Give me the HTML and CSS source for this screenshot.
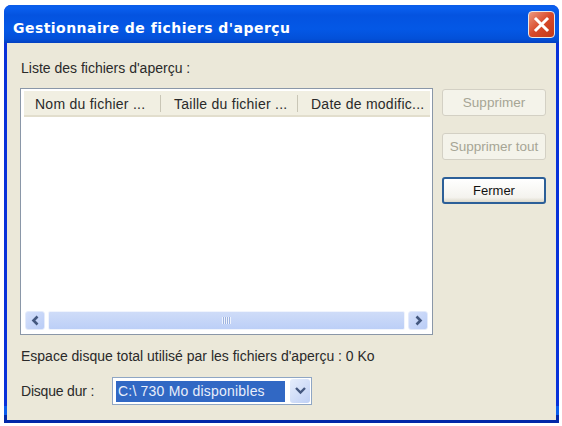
FILE: index.html
```html
<!DOCTYPE html>
<html>

<head>
    <title>Gestionnaire de fichiers d'aperçu</title>
    <link rel="stylesheet" href="styles.css">
</head>

<body>
    <div class="window">
        <div class="titlebar">
            <span class="title">Gestionnaire de fichiers d'aperçu</span>
            <div class="close">
                <svg width="17" height="17" viewBox="0 0 17 17">
                    <path d="M3 3 L14 14 M14 3 L3 14" stroke="#fff" stroke-width="3" stroke-linecap="square"/>
                </svg>
            </div>
        </div>

        <div class="client">
            <div class="list-label">Liste des fichiers d'aperçu :</div>

            <div class="main">
                <div class="list">
                    <div class="list-header">
                        <div class="col col-name">Nom du fichier ...</div>
                        <div class="col col-size">Taille du fichier ...</div>
                        <div class="col col-date">Date de modific...</div>
                    </div>
                    <div class="list-body"></div>
                    <div class="scrollbar">
                        <div class="scroll-btn">
                            <svg width="11" height="11" viewBox="0 0 11 11">
                                <path d="M7.5 1.5 L3.5 5.5 L7.5 9.5" fill="none" stroke="#44587f" stroke-width="2.6"/>
                            </svg>
                        </div>
                        <div class="scroll-thumb">
                            <div class="grip"></div>
                        </div>
                        <div class="scroll-btn">
                            <svg width="11" height="11" viewBox="0 0 11 11">
                                <path d="M3.5 1.5 L7.5 5.5 L3.5 9.5" fill="none" stroke="#44587f" stroke-width="2.6"/>
                            </svg>
                        </div>
                    </div>
                </div>

                <div class="buttons">
                    <button class="btn" disabled>Supprimer</button>
                    <button class="btn" disabled>Supprimer tout</button>
                    <button class="btn btn-default">Fermer</button>
                </div>
            </div>

            <div class="usage">Espace disque total utilisé par les fichiers d'aperçu : 0 Ko</div>

            <div class="drive-row">
                <span class="drive-label">Disque dur :</span>
                <div class="combo">
                    <div class="combo-value">C:\ 730 Mo disponibles</div>
                    <div class="combo-arrow">
                        <svg width="13" height="10" viewBox="0 0 13 10">
                            <path d="M2 2 L6.5 6.5 L11 2" fill="none" stroke="#44587f" stroke-width="2.4"/>
                        </svg>
                    </div>
                </div>
            </div>
        </div>
    </div>
</body>
</html>
```

FILE: styles.css
```css
html,
body {
    margin: 0;
    background: #fff;
}

body {
    padding: 5px 3px 3px 4px;
    height: 426px;
    box-sizing: border-box;
    overflow: hidden;
    font-family: "Liberation Sans", Arial, sans-serif;
    font-size: 14px;
    color: #2a2a2a;
}

.window {
    height: 100%;
    display: flex;
    flex-direction: column;
    background: linear-gradient(#0831d9 96%, #0a5cec 96%, #0a5cec 98%, #0228a8 98%);
    border-radius: 7px 7px 0 0;
    padding: 0 3px 3px;
    box-sizing: border-box;
}

.titlebar {
    height: 38px;
    margin: 0 -3px;
    padding: 0 4px 0 9px;
    display: flex;
    align-items: center;
    justify-content: space-between;
    border-radius: 7px 7px 0 0;
    background: linear-gradient(#0a5ce8 0, #0a5fee 3px, #0453e0 10px, #0458e6 24px, #0350d8 34px, #0340c0 38px);
}

.title {
    font-family: "DejaVu Sans", sans-serif;
    font-weight: bold;
    font-size: 14px;
    color: #fff;
    letter-spacing: 0.46px;
    padding-top: 7px;
}

.close {
    width: 25px;
    height: 25px;
    display: flex;
    align-items: center;
    justify-content: center;
    border: 1px solid #e8e8e8;
    border-radius: 4px;
    background: linear-gradient(135deg, #ec9a80, #d8492a 50%, #c23a18);
}

.client {
    flex: 1;
    background: #ebe8d9;
    padding: 17px 10px 0 13px;
    display: flex;
    flex-direction: column;
}

.list-label {
    height: 16px;
    line-height: 16px;
    margin-bottom: 12px;
    padding-left: 1px;
}

.main {
    display: flex;
    align-items: flex-start;
    gap: 9px;
}

.list {
    width: 413px;
    height: 247px;
    box-sizing: border-box;
    border: 1px solid #8a97a8;
    background: #fff;
    padding: 2px 2px 2px 3px;
    display: flex;
    flex-direction: column;
}

.list-header {
    height: 26px;
    display: flex;
    align-items: center;
    background: #f1efe2;
    border-bottom: 2px solid #e2decd;
    box-sizing: border-box;
}

.col {
    box-sizing: border-box;
    white-space: nowrap;
    overflow: hidden;
    padding-left: 11px;
    line-height: 19px;
    height: 17px;
    letter-spacing: 0.25px;
}

.col-name {
    width: 137px;
    border-right: 1px solid #c9c6b6;
}

.col-size {
    width: 137px;
    border-right: 1px solid #c9c6b6;
    padding-left: 13px;
}

.col-date {
    flex: 1;
    padding-left: 13px;
}

.list-body {
    flex: 1;
}

.scrollbar {
    height: 19px;
    display: flex;
    gap: 3px;
    padding: 0 2px 0 1px;
    margin-bottom: 2px;
    align-items: stretch;
}

.scroll-btn {
    width: 20px;
    display: flex;
    align-items: center;
    justify-content: center;
    border-radius: 3px;
    background: linear-gradient(135deg, #d6e1fb, #b9ccf6);
    border: 1px solid #e4ebfb;
    box-sizing: border-box;
}

.scroll-thumb {
    flex: 1;
    display: flex;
    align-items: center;
    justify-content: center;
    border-radius: 2px;
    border: 1px solid #f0f4fd;
    background: linear-gradient(#cfdcf8, #bccff7);
}

.grip {
    width: 9px;
    height: 7px;
    background: repeating-linear-gradient(90deg, #eef3fd 0 1px, #9fb4e0 1px 2px);
}

.buttons {
    display: flex;
    flex-direction: column;
    gap: 17px;
    padding-top: 1px;
}

.btn {
    width: 104px;
    height: 27px;
    padding: 0;
    border: 1px solid #d3d0c4;
    border-radius: 3px;
    background: #f4f3ea;
    font-family: inherit;
    font-size: 13.5px;
    color: #a6a595;
}

.btn-default {
    color: #111;
    font-size: 13px;
    border: 2px solid #2c5f98;
    background: linear-gradient(#ffffff, #f4f3ee 80%, #dcd8ca);
}

.usage {
    margin-top: 13px;
    height: 16px;
    line-height: 16px;
    padding-left: 1px;
}

.drive-row {
    display: flex;
    align-items: center;
    margin-top: 13px;
    padding-left: 1px;
}

.drive-label {
    width: 91px;
    letter-spacing: -0.2px;
}

.combo {
    width: 200px;
    height: 28px;
    box-sizing: border-box;
    border: 1px solid #8fa6c4;
    background: #fff;
    padding: 3px 1px 2px 3px;
    display: flex;
    gap: 5px;
}

.combo-value {
    flex: 1;
    background: #3168c4;
    color: #e8eefb;
    line-height: 21px;
    padding-left: 2px;
    letter-spacing: 0.2px;
}

.combo-arrow {
    width: 20px;
    margin: -2px 0 -1px;
    display: flex;
    align-items: center;
    justify-content: center;
    border-radius: 3px;
    background: linear-gradient(135deg, #e6eefc, #bfd0f5);
}
```
